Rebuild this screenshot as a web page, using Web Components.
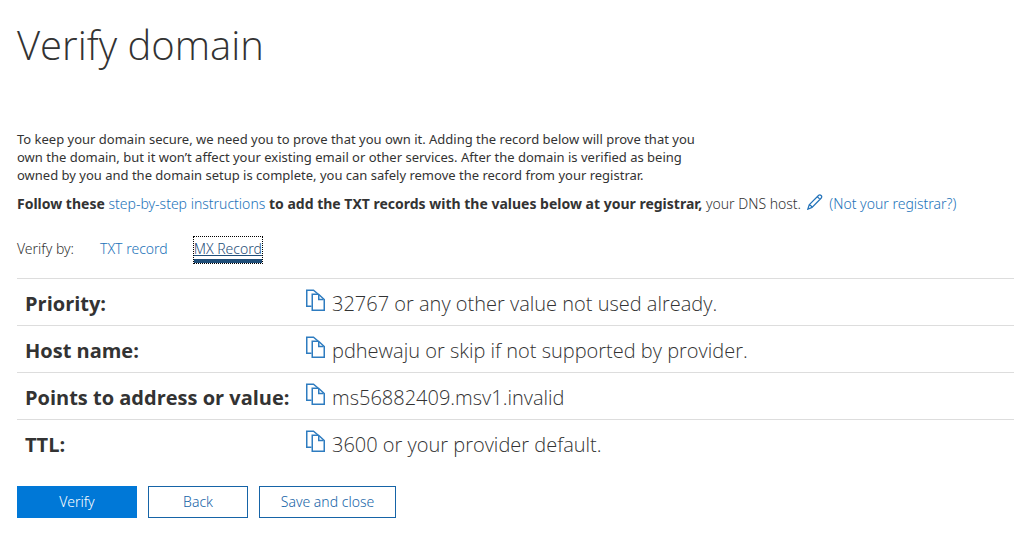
<!DOCTYPE html>
<html lang="en">
<head>
<meta charset="utf-8">
<meta name="viewport" content="width=device-width, initial-scale=1">
<title>Verify domain</title>
<style>
  body {
    margin: 0;
    background: #fff;
    color: #333;
    font: 300 14px/20px "Noto Sans", "Open Sans", sans-serif;
  }
</style>
</head>
<body>
<verify-page heading="Verify domain">
  <verify-intro></verify-intro>
  <record-tabs label="Verify by:">
    <record-tab href="#txt">TXT record</record-tab>
    <record-tab href="#mx" selected>MX Record</record-tab>
  </record-tabs>
  <record-table>
    <span data-label="Priority:">32767 or any other value not used already.</span>
    <span data-label="Host name:">pdhewaju or skip if not supported by provider.</span>
    <span data-label="Points to address or value:">ms56882409.msv1.invalid</span>
    <span data-label="TTL:">3600 or your provider default.</span>
  </record-table>
  <action-button slot="actions" class="verify" primary>Verify</action-button>
  <action-button slot="actions" class="back">Back</action-button>
  <action-button slot="actions" class="save">Save and close</action-button>
</verify-page>

<script>
class VerifyPage extends HTMLElement {
  constructor() {
    super();
    this.attachShadow({mode: 'open'}).innerHTML =
    `<style>
    :host {
      display: block;
      padding: 17px 0 17px 17px;
    }
    h1 {
      margin: 0 0 57px;
      font-family: "Open Sans", sans-serif;
      font-size: 40px;
      font-weight: 300;
      line-height: 56px;
    }
    .actions {
      display: flex;
      flex-wrap: wrap;
      gap: 11px;
      margin-top: 20px;
    }
    ::slotted(.verify) {
      width: 120px;
    }
    ::slotted(.back) {
      width: 100px;
    }
    ::slotted(.save) {
      width: 137px;
    }
    </style>
    <main>
      <h1></h1>
      <slot></slot>
      <div class="actions"><slot name="actions"></slot></div>
    </main>`;
    this.shadowRoot.querySelector('h1').textContent = this.getAttribute('heading');
  }
}

class VerifyIntro extends HTMLElement {
  constructor() {
    super();
    this.attachShadow({mode: 'open'}).innerHTML =
    `<style>
    :host {
      display: block;
    }
    p {
      margin: 0;
    }
    .why {
      max-width: 720px;
      font-size: 13px;
      font-weight: 400;
      line-height: 18px;
    }
    .follow {
      margin-top: 10px;
    }
    b {
      font-weight: 700;
    }
    a {
      color: #2272b9;
      text-decoration: none;
    }
    svg {
      width: 16px;
      height: 16px;
      margin: 0 3px 0 2px;
      vertical-align: -1px;
    }
    </style>
    <p class="why">To keep your domain secure, we need you to prove that you own it. Adding the record below will prove that you<br>own the domain, but it won’t affect your existing email or other services. After the domain is verified as being<br>owned by you and the domain setup is complete, you can safely remove the record from your registrar.</p>
    <p class="follow"><b>Follow these</b> <a href="#steps">step-by-step instructions</a> <b>to add the TXT records with the values below at your registrar,</b> your DNS host. <a href="#registrar"><svg viewBox="0 0 16 16" fill="none" stroke="currentColor" stroke-width="1.200" aria-hidden="true"><path d="M.8 15.2l1.4-4.4L11.7 1.300q1.200-1 2.400.2t.2 2.500L5 13.400zM10.300 2.700l2.700 2.700M2.200 10.800q2.200.3 2.800 2.600"/></svg> (Not your registrar?)</a></p>`;
  }
}

class RecordTabs extends HTMLElement {
  constructor() {
    super();
    this.attachShadow({mode: 'open'}).innerHTML =
    `<style>
    :host {
      display: block;
      margin: 23px 0 15px;
    }
    nav {
      display: flex;
      gap: 26px;
    }
    span {
      padding-top: 2px;
    }
    </style>
    <nav><span></span><slot></slot></nav>`;
    this.shadowRoot.querySelector('span').textContent = this.getAttribute('label');
  }
}

class RecordTab extends HTMLElement {
  constructor() {
    super();
    this.attachShadow({mode: 'open'}).innerHTML =
    `<style>
    :host {
      display: block;
    }
    a {
      display: block;
      padding-top: 2px;
      border-bottom: 4px solid transparent;
      color: #2272b9;
      line-height: 20px;
      text-decoration: none;
    }
    :host([selected]) a {
      border-color: #1f4e79;
      outline: 1px dotted #000;
      outline-offset: 0;
      color: #1f4e79;
      text-decoration: underline;
    }
    </style>
    <a><slot></slot></a>`;
    const link = this.shadowRoot.querySelector('a');
    link.href = this.getAttribute('href');
    if (this.hasAttribute('selected')) {
      link.setAttribute('aria-current', 'true');
    }
  }
}

class CopyButton extends HTMLElement {
  constructor() {
    super();
    this.attachShadow({mode: 'open'}).innerHTML =
    `<style>
    :host {
      display: block;
      flex: none;
    }
    button {
      display: block;
      padding: 0;
      border: 0;
      background: none;
      color: #2e7cc0;
      cursor: pointer;
    }
    svg {
      display: block;
      width: 20px;
      height: 22px;
    }
    </style>
    <button type="button" aria-label="Copy">
      <svg viewBox="0 0 20 22" fill="none" stroke="currentColor" stroke-width="1.500" aria-hidden="true">
        <path d="M6.500 17.250H1.750V1.250H8.500L13 5"/>
        <path d="M7.250 5.250H13.500L19.250 10.500V21.250H7.250z"/>
        <path d="M13.750 6V10.500H18.500"/>
      </svg>
    </button>`;
  }
}

// Turns each child with a data-label into one row of the table
class RecordTable extends HTMLElement {
  constructor() {
    super();
    this.attachShadow({mode: 'open'}).innerHTML =
    `<style>
    :host {
      display: block;
      font-family: "Open Sans", sans-serif;
    }
    table {
      width: 100%;
      border-collapse: separate;
      border-spacing: 0;
      font-size: 20px;
      line-height: 30px;
    }
    th, td {
      padding: 10px 8px 6px;
      border-top: 1px solid #ddd;
      text-align: left;
      vertical-align: top;
    }
    th {
      width: 272px;
      padding-right: 0;
      font-weight: 700;
      white-space: nowrap;
    }
    .value {
      display: flex;
      gap: 7px;
    }
    </style>
    <table><tbody></tbody></table>`;

    const body = this.shadowRoot.querySelector('tbody');
    Array.from(this.children).forEach((item, i) => {
      item.slot = 'value-' + i;
      const row = document.createElement('tr');
      row.innerHTML =
      `<th scope="row"></th>
      <td><div class="value"><copy-button></copy-button><slot name="value-${i}"></slot></div></td>`;
      row.querySelector('th').textContent = item.dataset.label;
      body.appendChild(row);
    });
  }
}

class ActionButton extends HTMLElement {
  constructor() {
    super();
    this.attachShadow({mode: 'open'}).innerHTML =
    `<style>
    :host {
      display: block;
    }
    button {
      box-sizing: border-box;
      width: 100%;
      height: 32px;
      padding: 0;
      border: 1px solid #1664a7;
      background: #fff;
      color: #1664a7;
      font: inherit;
      cursor: pointer;
    }
    :host([primary]) button {
      border-color: #0078d7;
      background: #0078d7;
      color: #fff;
    }
    </style>
    <button type="button"><slot></slot></button>`;
  }
}

window.customElements.define('verify-page', VerifyPage);
window.customElements.define('verify-intro', VerifyIntro);
window.customElements.define('record-tabs', RecordTabs);
window.customElements.define('record-tab', RecordTab);
window.customElements.define('copy-button', CopyButton);
window.customElements.define('record-table', RecordTable);
window.customElements.define('action-button', ActionButton);
</script>
</body>
</html>
